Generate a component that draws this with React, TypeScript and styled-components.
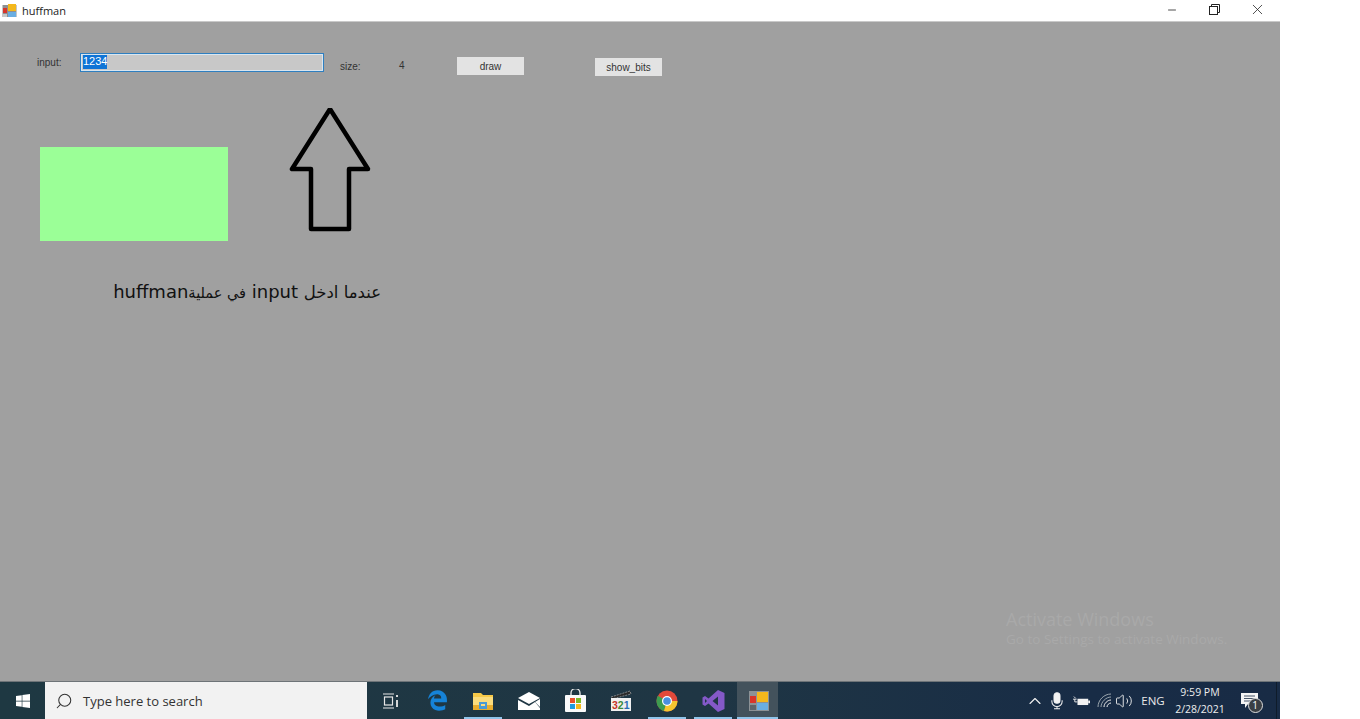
import React from "react";
import styled, { createGlobalStyle } from "styled-components";
import { FaEdgeLegacy, FaWindows } from "react-icons/fa6";
import { ChevronUp, Search, Volume2, X, Minus } from "lucide-react";

const GlobalStyle = createGlobalStyle`
  html, body {
    margin: 0;
    padding: 0;
    background: #fff;
    overflow: hidden;
  }
  body {
    font-family: "Liberation Sans", Arial, sans-serif;
  }
`;

const Screen = styled.div`
  position: relative;
  width: 1280px;
  height: 719px;
  display: flex;
  flex-direction: column;
`;

const TitleBar = styled.header`
  height: 21px;
  flex: none;
  display: flex;
  align-items: center;
  background: #fff;
  border-bottom: 1px solid #c9c9c9;
`;

const AppTitle = styled.span`
  margin-left: 5px;
  font: 11px "Open Sans", sans-serif;
  color: #222;
`;

const WinButtons = styled.div`
  margin-left: auto;
  margin-right: 1px;
  margin-top: -2px;
  display: flex;
  align-items: center;
  color: #222;
`;

const WinButton = styled.span`
  width: 43px;
  height: 20px;
  display: flex;
  align-items: center;
  justify-content: center;
`;

const Form = styled.main`
  flex: 1;
  background: #a0a0a0;
  padding: 31px 0 0 37px;
  box-sizing: border-box;
  display: flex;
  flex-direction: column;
`;

const TopRow = styled.div`
  display: flex;
  align-items: flex-start;
  height: 55px;
`;

const Label = styled.span<{ $left: number; $top: number; $width: number }>`
  width: ${(p) => p.$width}px;
  margin-left: ${(p) => p.$left}px;
  margin-top: ${(p) => p.$top}px;
  font-size: 10px;
  line-height: 12px;
  color: #333;
  white-space: pre;
`;

const TextBox = styled.div`
  width: 244px;
  height: 19px;
  box-sizing: border-box;
  padding: 0 0 0 2px;
  background: #c8c8c8;
  border: 1px solid #2f7fc0;
  box-shadow: inset 0 0 0 1px #d9e6f0;
`;

const Selected = styled.span`
  display: block;
  width: 24px;
  height: 14px;
  margin-top: 1px;
  background: #0f74d6;
  color: #fff;
  font-size: 11px;
  line-height: 13px;
  text-align: center;
`;

const FlatButton = styled.div<{ $left: number; $top: number }>`
  width: 67px;
  height: 18px;
  margin-left: ${(p) => p.$left}px;
  margin-top: ${(p) => p.$top}px;
  background: #e3e3e3;
  color: #333;
  font-size: 10px;
  line-height: 19px;
  text-align: center;
`;

const DrawRow = styled.div`
  display: flex;
  align-items: flex-start;
  margin-left: 3px;
  height: 128px;
`;

const GreenPanel = styled.div`
  width: 188px;
  height: 94px;
  margin-top: 39px;
  background: #9bff97;
`;

const ArrowIcon = styled.svg`
  width: 82px;
  height: 125px;
  margin-left: 61px;
`;

const Note = styled.p`
  width: 267px;
  height: 24px;
  margin: 44px 0 0 77px;
  font: 18px/24px "DejaVu Sans", sans-serif;
  color: #111;
  white-space: nowrap;
  text-align: right;
`;

const ArabicRun = styled.span<{ $size: number }>`
  font-size: ${(p) => p.$size}px;
`;

const Watermark = styled.div`
  position: absolute;
  left: 1006px;
  top: 609px;
  color: #a9a9a9;
  font-family: "Open Sans", sans-serif;
`;

const WatermarkTitle = styled.div`
  font-size: 18px;
  line-height: 21px;
`;

const WatermarkSub = styled.div`
  font-size: 13.5px;
  line-height: 19px;
  white-space: nowrap;
`;

const Taskbar = styled.footer`
  height: 37px;
  flex: none;
  display: flex;
  align-items: stretch;
  border-top: 1px solid #6e7478;
  background: linear-gradient(90deg, #1e3842 0%, #1f3644 55%, #182c46 85%, #182b45 100%);
  color: #fff;
`;

const StartButton = styled.div`
  width: 45px;
  display: flex;
  align-items: center;
  justify-content: center;
  color: #fff;
`;

const SearchBox = styled.div`
  width: 322px;
  display: flex;
  align-items: center;
  gap: 10px;
  padding-left: 10px;
  box-sizing: border-box;
  background: #f2f2f2;
  color: #333;
  font: 13px "Open Sans", sans-serif;
`;

const Slot = styled.div<{ $open?: boolean }>`
  position: relative;
  width: 46px;
  flex: none;
  display: flex;
  align-items: center;
  justify-content: center;

  &::after {
    content: "";
    display: ${(p) => (p.$open ? "block" : "none")};
    position: absolute;
    left: 4px;
    right: 4px;
    bottom: 0;
    height: 2px;
    background: #8fc4ea;
  }
`;

const TaskViewSlot = styled(Slot)`
  width: 47px;
`;

const ActiveSlot = styled(Slot)`
  width: 41px;
  margin-left: 1px;
  padding-left: 3px;
  box-sizing: border-box;
  background: #43525c;

  &::after {
    left: 0;
    right: 0;
  }
`;

const Tray = styled.div`
  margin-left: auto;
  display: flex;
  align-items: center;
  padding-right: 5px;
  margin-right: 3px;
  border-right: 1px solid #0f1c2a;
`;

const TrayItem = styled.span<{ $width: number }>`
  width: ${(p) => p.$width}px;
  display: flex;
  align-items: center;
  justify-content: center;
  color: #f2f2f2;
`;

const TrayText = styled.span`
  font: 11.5px "Open Sans", sans-serif;
  color: #e8e8e8;
`;

const Clock = styled.div`
  width: 54px;
  text-align: center;
  font: 10.5px/17px "Open Sans", sans-serif;
  color: #eee;
  white-space: nowrap;
`;

const NoticeWrap = styled.span`
  position: relative;
  display: flex;
`;

const Badge = styled.span`
  position: absolute;
  left: 7px;
  top: 5px;
  width: 13px;
  height: 13px;
  border-radius: 50%;
  border: 1px solid #ddd;
  background: #3a3f44;
  font: 10px/13px "Open Sans", sans-serif;
  text-align: center;
  color: #fff;
`;

const AppIcon = () => (
  <svg width="15" height="15" viewBox="0 0 15 15" style={{ marginLeft: 2 }}>
    <rect x="0.500" y="2" width="14" height="12" fill="#8d8f92" />
    <rect x="1" y="5" width="4" height="5" fill="#d8352a" />
    <rect x="1" y="11" width="4" height="3" fill="#c8c8c8" />
    <rect x="6" y="1" width="8" height="7" fill="#f4b81c" />
    <rect x="6" y="9" width="8" height="5" fill="#6aaee2" />
  </svg>
);

const TaskView = () => (
  <svg width="18" height="16" viewBox="0 0 18 16" fill="none" stroke="#e8e8e8" strokeWidth="1.2">
    <path d="M1 1h11M1 15h11" />
    <rect x="2.500" y="4" width="8" height="8" />
    <path d="M15 2v2M15 7v7" strokeWidth="1.800" />
  </svg>
);

const Explorer = () => (
  <svg width="22" height="20" viewBox="0 0 22 20">
    <path d="M1 2h8l2 2h10v15H1z" fill="#f7c948" />
    <rect x="1" y="6" width="20" height="13" fill="#fbdc7c" />
    <rect x="1" y="14" width="20" height="5" fill="#e9ad2e" />
    <rect x="7" y="11" width="8" height="7" fill="#4a9ad4" />
    <rect x="9" y="13" width="4" height="2" fill="#fbdc7c" />
  </svg>
);

const Mail = () => (
  <svg width="24" height="18" viewBox="0 0 24 18">
    <path d="M1 6 12 0l11 6-11 6z" fill="#fff" />
    <path d="M1 8l11 6 6-4 5 6v2H1z" fill="#fff" />
    <path d="M23 7v8l-5-5z" fill="#fff" />
  </svg>
);

const Store = () => (
  <svg width="23" height="24" viewBox="0 0 23 24">
    <path d="M7 6V4a4.500 4.500 0 0 1 9 0v2" fill="none" stroke="#eee" strokeWidth="1.300" />
    <rect x="1" y="6" width="21" height="17" rx="1" fill="#fafafa" />
    <rect x="6" y="9" width="5" height="5" fill="#e8502a" />
    <rect x="12" y="9" width="5" height="5" fill="#7db928" />
    <rect x="6" y="15" width="5" height="5" fill="#1f9be0" />
    <rect x="12" y="15" width="5" height="5" fill="#f6b91c" />
  </svg>
);

const Clapboard = () => (
  <svg width="22" height="22" viewBox="0 0 22 22">
    <path d="M1 7 20 1l1 3L2 9z" fill="#2a2a2a" stroke="#ddd" strokeWidth=".5" strokeDasharray="2 1" />
    <rect x="1" y="8" width="20" height="13" fill="#f0f0f0" />
    <text x="2" y="19" fontFamily="Liberation Sans" fontWeight="700" fontSize="10.500">
      <tspan fill="#c8352a">3</tspan>
      <tspan fill="#3d8a3a">2</tspan>
      <tspan fill="#2a6bb8">1</tspan>
    </text>
  </svg>
);

const Chrome = () => (
  <svg width="22" height="22" viewBox="0 0 22 22">
    <circle cx="11" cy="11" r="10.500" fill="#e2493a" />
    <path d="M11 11 1.900 5.800A10.500 10.500 0 0 0 8 21.100z" fill="#3d9c4f" />
    <path d="M11 11h10.500A10.500 10.500 0 0 1 8 21.100z" fill="#f7c62f" />
    <circle cx="11" cy="11" r="5" fill="#fff" />
    <circle cx="11" cy="11" r="3.800" fill="#4a8fe0" />
  </svg>
);

const VisualStudio = () => (
  <svg width="23" height="22" viewBox="0 0 22 22">
    <path d="M15.500 0 22 3v16l-6.500 3L6 13.500 2.500 16 0 14.500v-7L2.500 6 6 8.500z" fill="#8459c8" />
    <path d="M15.500 6.500 10 11l5.500 4.500zM2.500 9v4L4.500 11z" fill="#1f3644" />
  </svg>
);

const Huffman = () => (
  <svg width="20" height="20" viewBox="0 0 20 20">
    <rect x="0" y="0" width="20" height="20" fill="#8c9296" />
    <rect x="1" y="5" width="6" height="7" fill="#d8352a" />
    <rect x="1" y="14" width="6" height="5" fill="#5d646a" />
    <rect x="8" y="1" width="11" height="10" fill="#f4b81c" />
    <rect x="8" y="12" width="11" height="7" fill="#6aaee2" />
  </svg>
);

const MicIcon = () => (
  <svg width="12" height="18" viewBox="0 0 14 20" fill="none" stroke="#f2f2f2" strokeWidth="1.200">
    <rect x="3.500" y="0.500" width="7" height="12" rx="3.500" fill="#f2f2f2" />
    <path d="M1 9v1.500a6 6 0 0 0 12 0V9M7 16.500V19M3.500 19h7" />
  </svg>
);

const Battery = () => (
  <svg width="17" height="12" viewBox="0 0 19 12" fill="#f2f2f2">
    <path d="M1 1l2 2M0 4h4M2 4v3h3" stroke="#f2f2f2" strokeWidth="1" fill="none" />
    <rect x="5" y="3.500" width="12" height="7" />
    <rect x="17" y="5.500" width="2" height="3" />
  </svg>
);

const Wifi = () => (
  <svg width="15" height="15" viewBox="0 0 15 15" fill="none" stroke="#9aa5ad" strokeWidth="1">
    <path d="M1 14C1 7 7 1 14 1" />
    <path d="M4 14c0-5 5-10 10-10" />
    <path d="M7 14c0-3.500 3.500-7 7-7" stroke="#f2f2f2" />
    <path d="M10 14c0-2 2-4 4-4" stroke="#f2f2f2" />
  </svg>
);

const Notice = () => (
  <svg width="17" height="15" viewBox="0 0 17 15" fill="#f4f4f4">
    <path d="M0 0h17v11H7l-3 4v-4H0z" />
    <path d="M3 3h11M3 5.500h11M3 8h8" stroke="#1a2c44" strokeWidth=".8" />
  </svg>
);

export default function App() {
  return (
    <>
      <GlobalStyle />
      <Screen>
        <TitleBar>
          <AppIcon />
          <AppTitle>huffman</AppTitle>
          <WinButtons>
            <WinButton>
              <Minus size={12} strokeWidth={1.6} />
            </WinButton>
            <WinButton>
              <svg width="11" height="11" viewBox="0 0 11 11" fill="none" stroke="#222">
                <rect x="0.500" y="2.500" width="8" height="8" />
                <path d="M2.500 2.500v-2h8v8h-2" />
              </svg>
            </WinButton>
            <WinButton>
              <X size={17} strokeWidth={1.1} />
            </WinButton>
          </WinButtons>
        </TitleBar>

        <Form>
          <TopRow>
            <Label $left={0} $top={4} $width={43}>input:</Label>
            <TextBox>
              <Selected>1234</Selected>
            </TextBox>
            <Label $left={16} $top={8} $width={59}>size:</Label>
            <Label $left={0} $top={7} $width={58}>4</Label>
            <FlatButton $left={0} $top={4}>draw</FlatButton>
            <FlatButton $left={71} $top={5}>show_bits</FlatButton>
          </TopRow>

          <DrawRow>
            <GreenPanel />
            <ArrowIcon viewBox="0 0 82 125">
              <path
                d="M41 1 3 61H22V121H60V61H79Z"
                fill="none"
                stroke="#000"
                strokeWidth="4.500"
                strokeLinejoin="round"
              />
            </ArrowIcon>
          </DrawRow>

          <Note dir="rtl">
            <ArabicRun $size={16.5}>عندما ادخل</ArabicRun> input <ArabicRun $size={14.5}>في عملية</ArabicRun>huffman
          </Note>
        </Form>

        <Watermark>
          <WatermarkTitle>Activate Windows</WatermarkTitle>
          <WatermarkSub>Go to Settings to activate Windows.</WatermarkSub>
        </Watermark>

        <Taskbar>
          <StartButton>
            <FaWindows size={16} />
          </StartButton>
          <SearchBox>
            <Search size={18} strokeWidth={1.4} style={{ transform: "scaleX(-1)" }} />
            Type here to search
          </SearchBox>
          <TaskViewSlot><TaskView /></TaskViewSlot>
          <Slot><FaEdgeLegacy size={21} color="#1683d8" /></Slot>
          <Slot $open><Explorer /></Slot>
          <Slot><Mail /></Slot>
          <Slot><Store /></Slot>
          <Slot><Clapboard /></Slot>
          <Slot $open><Chrome /></Slot>
          <Slot $open><VisualStudio /></Slot>
          <ActiveSlot $open><Huffman /></ActiveSlot>
          <Tray>
            <TrayItem $width={22}><ChevronUp size={20} strokeWidth={1.3} /></TrayItem>
            <TrayItem $width={22}><MicIcon /></TrayItem>
            <TrayItem $width={26}><Battery /></TrayItem>
            <TrayItem $width={21}><Wifi /></TrayItem>
            <TrayItem $width={18}><Volume2 size={18} strokeWidth={1.2} /></TrayItem>
            <TrayItem $width={40}><TrayText>ENG</TrayText></TrayItem>
            <Clock>
              9:59 PM
              <br />
              2/28/2021
            </Clock>
            <TrayItem $width={44}>
              <NoticeWrap>
                <Notice />
                <Badge>1</Badge>
              </NoticeWrap>
            </TrayItem>
          </Tray>
        </Taskbar>
      </Screen>
    </>
  );
}
